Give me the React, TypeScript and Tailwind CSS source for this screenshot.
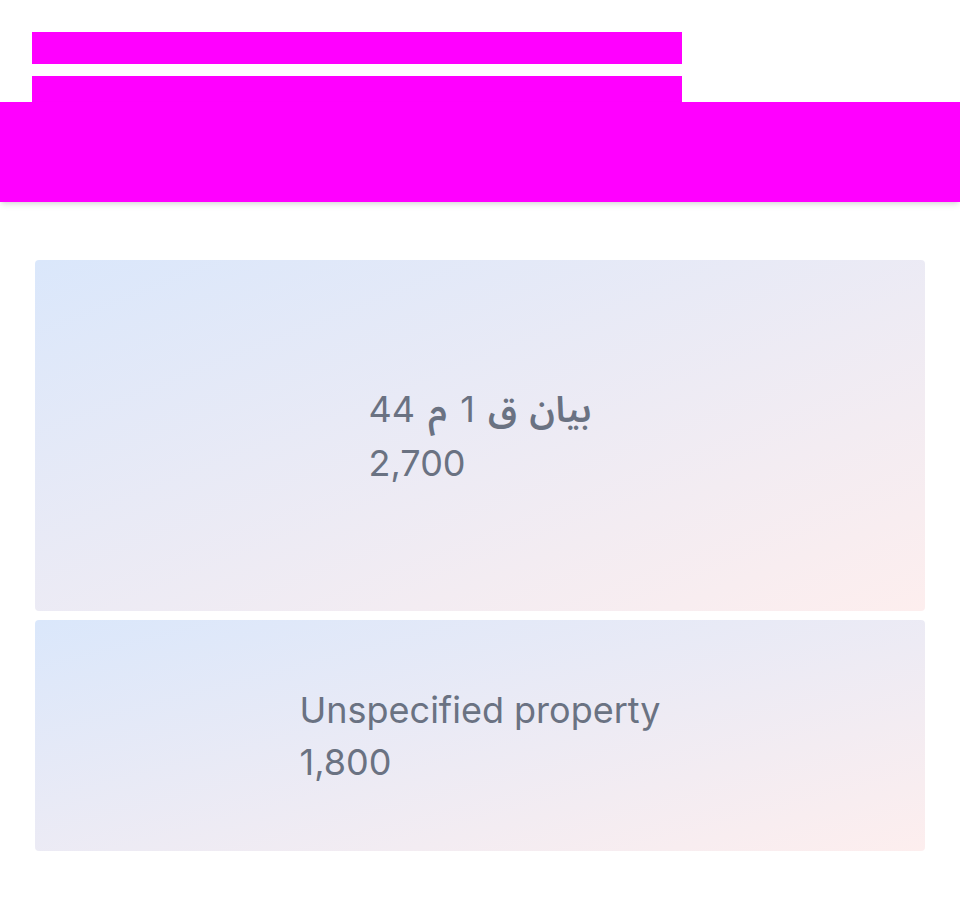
const items = [
  { id: 'a', label: 'بيان ق 1 م 44', value: '2,700', height: 'h-[351px]' },
  { id: 'b', label: 'Unspecified property', value: '1,800', height: 'h-[231px]' },
];

// Arabic words get a heavier face, as in the reference, digits stay in Inter
function Label({ text }: { text: string }) {
  const parts = text.split(/([\u0600-\u06FF]+(?: [\u0600-\u06FF]+)*)/);
  const rtl = /[\u0600-\u06FF]/.test(text);
  return (
    <div className={rtl ? '[word-spacing:3px]' : ''}>
      {parts.map((p, i) =>
        /[\u0600-\u06FF]/.test(p) ? (
          <span key={i} className="font-['Noto_Sans_Arabic','DejaVu_Sans',sans-serif] font-semibold">
            {p}
          </span>
        ) : (
          <span key={i}>{p}</span>
        )
      )}
    </div>
  );
}

export default function App() {
  return (
    <div className="min-h-screen bg-white rounded-xl overflow-hidden font-['Inter','Noto_Sans',sans-serif]">
      {/* Title area (redacted) */}
      <div className="px-8 pt-8">
        <div className="h-8 w-[650px] bg-[#ff00ff]" />
        <div className="mt-3 h-[26px] w-[650px] bg-[#ff00ff]" />
      </div>

      {/* Sticky toolbar (redacted) */}
      <div className="h-[100px] bg-[#ff00ff] shadow-md" />

      {/* Breakdown tiles */}
      <div className="px-[35px] pt-[58px] pb-10 flex flex-col gap-[9px]">
        {items.map((item) => (
          <div
            key={item.id}
            className={`${item.height} rounded bg-gradient-to-br from-[#dae7fb] to-[#fdeeee] flex items-center justify-center`}
          >
            <div className="text-4xl leading-[52px] text-gray-500">
              <Label text={item.label} />
              <div>{item.value}</div>
            </div>
          </div>
        ))}
      </div>
    </div>
  );
}
